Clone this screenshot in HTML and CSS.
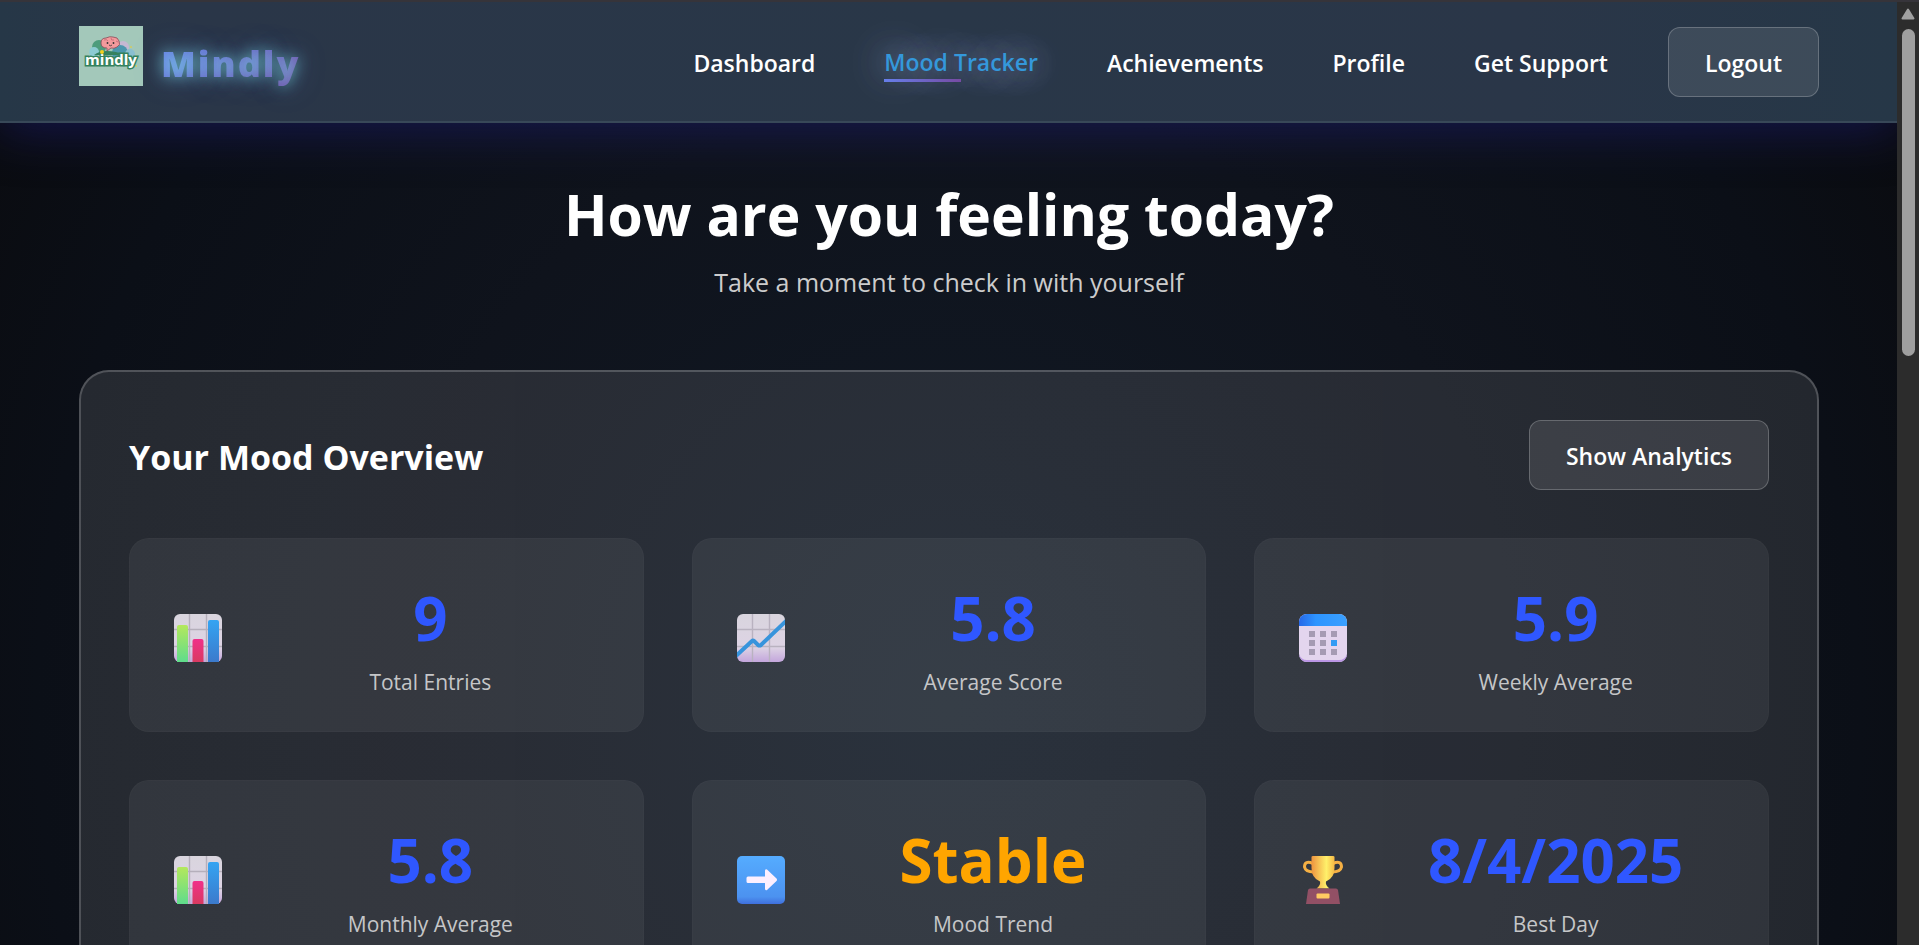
FILE: index.html
```html
<!DOCTYPE html>
<html lang="en">
<head>
<meta charset="utf-8">
<title>Mindly - Mood Tracker</title>
<link rel="stylesheet" href="styles.css">
</head>
<body>
<svg class="defs" aria-hidden="true">
  <defs>
    <linearGradient id="paper" x1="0" y1="0" x2="0" y2="1"><stop offset="0" stop-color="#d9d5de"/><stop offset=".7" stop-color="#ddd3e4"/><stop offset="1" stop-color="#c3a6dc"/></linearGradient>
    <linearGradient id="green" x1="0" y1="0" x2="0" y2="1"><stop offset="0" stop-color="#b4e85c"/><stop offset="1" stop-color="#5fdc8c"/></linearGradient>
    <linearGradient id="pink" x1="0" y1="0" x2="0" y2="1"><stop offset="0" stop-color="#f0308a"/><stop offset="1" stop-color="#d93a60"/></linearGradient>
    <linearGradient id="blue" x1="0" y1="0" x2="0" y2="1"><stop offset="0" stop-color="#34a4f2"/><stop offset="1" stop-color="#3c7acc"/></linearGradient>
    <linearGradient id="calTop" x1="0" y1="0" x2="1" y2="0"><stop offset="0" stop-color="#2668e8"/><stop offset=".35" stop-color="#2d94ff"/><stop offset="1" stop-color="#3aa0ff"/></linearGradient>
    <linearGradient id="arrowBg" x1="0" y1="0" x2="0" y2="1"><stop offset="0" stop-color="#55acff"/><stop offset=".85" stop-color="#4c92f0"/><stop offset="1" stop-color="#3f6fdc"/></linearGradient>
    <linearGradient id="gold" x1="0" y1="0" x2="1" y2="0"><stop offset="0" stop-color="#ee9440"/><stop offset=".65" stop-color="#fff06a"/><stop offset="1" stop-color="#f5b845"/></linearGradient>
    <symbol id="bars" viewBox="0 0 48 48">
      <rect width="48" height="48" rx="6" fill="url(#paper)"/>
      <path d="M15.500 0V48M32.500 0V48M0 15.500H48M0 32.500H48" stroke="#b5afbb" stroke-width="1.400"/>
      <path d="M3 48V13q0-2 2-2h7q2 0 2 2V48z" fill="url(#green)"/>
      <path d="M18.500 48V27q0-2 2-2h7q2 0 2 2V48z" fill="url(#pink)"/>
      <path d="M34 48V8q0-2 2-2h7q2 0 2 2V48z" fill="url(#blue)"/>
    </symbol>
    <symbol id="trend" viewBox="0 0 48 48">
      <clipPath id="sheet"><rect width="48" height="48" rx="6"/></clipPath>
      <rect width="48" height="48" rx="6" fill="url(#paper)"/>
      <path d="M15.500 0V48M32.500 0V48M0 15.500H48M0 32.500H48" stroke="#b9b2c0" stroke-width="1.400"/>
      <path d="M-2 43 15 27Q16 26 17 27L21 31Q22.500 32 24 31L50 6" fill="none" stroke="#3794dc" stroke-width="4" clip-path="url(#sheet)"/>
    </symbol>
    <symbol id="calendar" viewBox="0 0 48 48">
      <rect width="48" height="48" rx="8" fill="#e3d5ee"/>
      <path d="M0 40a8 8 0 0 0 8 8h32a8 8 0 0 0 8-8q-2 6-8 6H8q-6 0-8-6z" fill="#bb96e4"/>
      <path d="M0 12V8a8 8 0 0 1 8-8h32a8 8 0 0 1 8 8v4z" fill="url(#calTop)"/>
      <path d="M10 17h6v6h-6zM21 17h6v6h-6zM32 17h6v6h-6zM10 26h6v6h-6zM21 26h6v6h-6zM10 35h6v6h-6zM21 35h6v6h-6zM32 35h6v6h-6z" fill="#a59bb3"/>
      <path d="M32 26h6v6h-6z" fill="#329bf4"/>
    </symbol>
    <symbol id="arrow" viewBox="0 0 48 48">
      <rect width="48" height="48" rx="5" fill="url(#arrowBg)"/>
      <path d="M11 20.500H28V14.500Q28.500 12.500 30 13.500L39.500 22.500Q40.500 23.700 39.500 25L30 34Q28.500 35 28 33V27H11Q9.500 27 9.500 25.500V22Q9.500 20.500 11 20.500z" fill="#fcefff"/>
    </symbol>
    <symbol id="trophy" viewBox="0 0 48 48">
      <path d="M14 7.500Q5.500 4 5.500 11Q6.500 16 15 16M34 7.500Q42.500 4 42.500 11Q41.500 16 33 16" fill="none" stroke="#f5b044" stroke-width="3"/>
      <path d="M12.500 1Q12.500 0 14 0H34Q35.500 0 35.500 1V12Q35.500 22 27 25.500Q26 29 30.500 32.500H17.500Q22 29 21 25.500Q12.500 22 12.500 12z" fill="url(#gold)"/>
      <path d="M11 32.500H37Q38.500 32.500 39 34L41 48H7L9 34Q9.500 32.500 11 32.500z" fill="#925065"/>
      <rect x="17.500" y="37.500" width="13" height="5" rx="1" fill="#ffcb62"/>
    </symbol>
  </defs>
</svg>
<div class="window">
  <div class="page">
    <header class="navbar">
      <a class="brand" href="#">
        <svg class="brand-logo" viewBox="0 0 64 60" aria-hidden="true">
          <rect width="64" height="60" fill="#a3c8ba"/>
          <circle cx="20" cy="21" r="7" fill="#4d9c7c"/>
          <circle cx="44" cy="21" r="6" fill="#c5b8d2"/>
          <circle cx="15" cy="26" r="5" fill="#8ccbd2"/>
          <circle cx="41" cy="27" r="8" fill="#4b97ad"/>
          <circle cx="51" cy="28" r="5" fill="#8abfd0"/>
          <path d="M15 29q10-8 32 0z" fill="#34815f"/>
          <path d="M22 17q0-5 5-5 4-2 7-1 5 0 6 4 2 4-2 6-3 2-6 1l-4 3v-3q-6 0-6-5z" fill="#f39a9c" stroke="#854b58" stroke-width=".8"/>
          <path d="M25 14q3-1 4 1M32 12q0 3 3 2M37 15l2 1" stroke="#b65f6e" stroke-width=".7" fill="none"/>
          <circle cx="28.500" cy="17" r=".9" fill="#333"/><circle cx="34.500" cy="17" r=".9" fill="#333"/>
          <path d="M30 19q1.500 1.500 3 0" stroke="#333" stroke-width=".8" fill="none"/>
          <circle cx="52" cy="21" r=".9" fill="#d9cb56"/><circle cx="57" cy="40" r=".9" fill="#d9cb56"/>
          <text class="logo-text" x="32" y="39" text-anchor="middle">mindly</text>
          <circle cx="23" cy="26" r="2" fill="#f4cf1e"/>
        </svg>
        <span class="brand-name">Mindly</span>
      </a>
      <nav class="nav-links">
        <a href="#">Dashboard</a>
        <a class="active" href="#">Mood Tracker</a>
        <a href="#">Achievements</a>
        <a href="#">Profile</a>
        <a href="#">Get Support</a>
        <button class="btn logout" type="button">Logout</button>
      </nav>
    </header>
    <main class="content">
      <div class="intro">
        <h1>How are you feeling today?</h1>
        <p>Take a moment to check in with yourself</p>
      </div>
      <section class="overview">
        <div class="overview-head">
          <h2>Your Mood Overview</h2>
          <button class="btn" type="button">Show Analytics</button>
        </div>
        <div class="stats">
          <article class="stat"><svg class="icon"><use href="#bars"/></svg><div class="stat-body"><strong>9</strong><span>Total Entries</span></div></article>
          <article class="stat"><svg class="icon"><use href="#trend"/></svg><div class="stat-body"><strong>5.8</strong><span>Average Score</span></div></article>
          <article class="stat"><svg class="icon"><use href="#calendar"/></svg><div class="stat-body"><strong>5.9</strong><span>Weekly Average</span></div></article>
          <article class="stat"><svg class="icon"><use href="#bars"/></svg><div class="stat-body"><strong>5.8</strong><span>Monthly Average</span></div></article>
          <article class="stat"><svg class="icon"><use href="#arrow"/></svg><div class="stat-body"><strong class="stable">Stable</strong><span>Mood Trend</span></div></article>
          <article class="stat"><svg class="icon"><use href="#trophy"/></svg><div class="stat-body"><strong>8/4/2025</strong><span>Best Day</span></div></article>
        </div>
      </section>
    </main>
  </div>
  <div class="scrollbar" aria-hidden="true">
    <svg class="scroll-arrow" viewBox="0 0 14 12"><path d="M7 1.500 12.500 10.500H1.500z" fill="#a0a0a0" stroke="#a0a0a0" stroke-width="2" stroke-linejoin="round"/></svg>
    <div class="scroll-thumb"></div>
  </div>
</div>
</body>
</html>
```
FILE: styles.css
```css
* { box-sizing: border-box; }
body {
  margin: 0;
  background: #0a0b0f;
  color: #fff;
  font-family: "Open Sans", "Noto Sans", sans-serif;
  font-size: 23px;
  overflow: hidden;
}
h1, h2, p { margin: 0; }
a { color: inherit; text-decoration: none; }
.defs { position: absolute; width: 0; height: 0; }
.window {
  display: flex;
  height: 100vh;
  border-top: 2px solid #36343a;
}
.page {
  flex: 1;
  min-width: 0;
  overflow: hidden;
  background: radial-gradient(ellipse 60% 130% at 50% 75%, #111a26 0%, #0f131c 50%, #0b0f17 80%, #0a0b0f 100%);
}
.navbar {
  display: flex;
  align-items: center;
  justify-content: space-between;
  height: 121px;
  padding: 0 78px 0 79px;
  background: linear-gradient(90deg, #263747, #2a3648 10%, #293748 50%, #2a3648 80%, #263747);
  border-bottom: 2px solid #384858;
  box-shadow: 0 8px 48px rgba(30, 30, 120, .55);
}
.brand { display: flex; align-items: center; gap: 18px; }
.brand-logo { width: 64px; height: 60px; margin-bottom: 12px; }
.logo-text {
  font: 700 15px "Open Sans", sans-serif;
  fill: #fff;
  stroke: #35825e;
  stroke-width: 3px;
  paint-order: stroke;
}
.brand-name {
  padding-top: 4px;
  font-size: 36px;
  font-weight: 800;
  line-height: 48px;
  letter-spacing: 2px;
  background: linear-gradient(135deg, #667eea, #764ba2);
  background-clip: text;
  -webkit-background-clip: text;
  color: transparent;
  text-shadow: 0 0 15px rgba(120, 220, 225, .75), 0 0 30px rgba(102, 126, 234, .4);
}
.nav-links { display: flex; align-items: center; gap: 69px; font-weight: 600; }
.nav-links a { padding-top: 2px; line-height: 36px; white-space: nowrap; }
.nav-links .active {
  position: relative;
  padding-top: 0;
  color: #3498db;
  text-shadow: 0 0 30px rgba(160, 180, 240, .8), 0 0 48px rgba(160, 180, 200, .8);
}
.active::after {
  content: "";
  position: absolute;
  left: 0;
  bottom: -2px;
  width: 50%;
  height: 3px;
  background: linear-gradient(90deg, #667eea, #764ba2);
}
.btn {
  height: 70px;
  padding: 2px 36px 0;
  border: 1px solid rgba(255, 255, 255, .22);
  border-radius: 12px;
  background: rgba(255, 255, 255, .1);
  color: #fff;
  font: 600 23px "Open Sans", "Noto Sans", sans-serif;
}
.logout { margin-left: -9px; }
.content { padding: 47px 78px 48px 79px; }
.intro { text-align: center; }
.intro h1 { font-size: 57px; line-height: 88px; }
.intro p { color: #ccc; font-size: 25px; line-height: 48px; }
.overview {
  margin-top: 64px;
  padding: 48px;
  border: 2px solid rgba(255, 255, 255, .2);
  border-radius: 30px;
  background: linear-gradient(90deg, rgba(255, 255, 255, .11), rgba(255, 255, 255, .1));
}
.overview-head { display: flex; align-items: center; justify-content: space-between; }
.overview-head h2 { padding-top: 4px; font-size: 34px; line-height: 48px; }
.stats {
  display: grid;
  grid-template-columns: repeat(3, 1fr);
  gap: 48px;
  margin-top: 48px;
}
.stat {
  display: flex;
  align-items: center;
  gap: 24px;
  min-height: 194px;
  padding: 30px 36px 28px;
  border: 1px solid rgba(255, 255, 255, .02);
  border-radius: 20px;
  background: rgba(255, 255, 255, .06);
}
.icon { width: 64px; height: 48px; margin-top: 4px; }
.stat-body { flex: 1; text-align: center; }
.stat-body strong { display: block; color: #2f57ff; font-size: 60px; line-height: 92px; }
.stat-body .stable { color: #ffa500; }
.stat-body span { display: block; color: #c5c6c8; font-size: 21px; line-height: 36px; }
.scrollbar {
  display: flex;
  flex-direction: column;
  align-items: center;
  gap: 9px;
  width: 22px;
  padding-top: 6px;
  background: #2c2c2c;
}
.scroll-arrow { width: 14px; height: 12px; }
.scroll-thumb { width: 13px; height: 327px; border-radius: 7px; background: #9f9f9f; }
```
